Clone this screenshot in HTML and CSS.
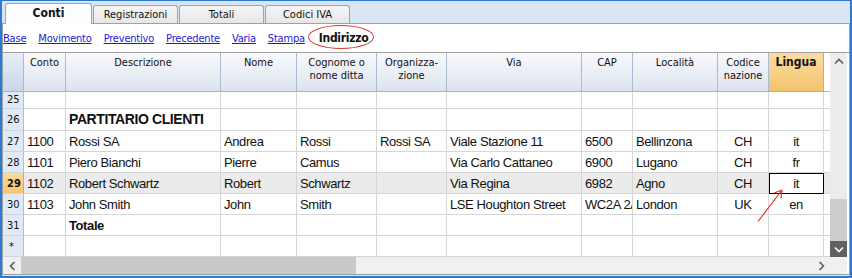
FILE: index.html
```html
<!DOCTYPE html>
<html lang="it">
<head>
    <meta charset="UTF-8">
    <title>Conti - Indirizzo</title>
    <link rel="stylesheet" href="styles.css">
</head>
<body>
    <div class="window">
        <div class="tabs">
            <div class="tab active">Conti</div>
            <div class="tab">Registrazioni</div>
            <div class="tab">Totali</div>
            <div class="tab">Codici IVA</div>
        </div>

        <div class="pane">
            <nav class="views">
                <a href="#">Base</a>
                <a href="#">Movimento</a>
                <a href="#">Preventivo</a>
                <a href="#">Precedente</a>
                <a href="#">Varia</a>
                <a href="#">Stampa</a>
                <span class="current">Indirizzo</span>
            </nav>

            <div class="sheet-area">
                <div class="sheet">
                    <div class="row head">
                        <div class="cell num"></div>
                        <div class="cell">Conto</div>
                        <div class="cell">Descrizione</div>
                        <div class="cell">Nome</div>
                        <div class="cell">Cognome o<br>nome ditta</div>
                        <div class="cell">Organizza-<br>zione</div>
                        <div class="cell">Via</div>
                        <div class="cell">CAP</div>
                        <div class="cell">Località</div>
                        <div class="cell">Codice<br>nazione</div>
                        <div class="cell sorted">Lingua</div>
                        <div class="cell fill"></div>
                    </div>
                    <div class="row first">
                        <div class="cell num">25</div>
                        <div class="cell"></div><div class="cell"></div><div class="cell"></div>
                        <div class="cell"></div><div class="cell"></div><div class="cell"></div>
                        <div class="cell"></div><div class="cell"></div><div class="cell"></div>
                        <div class="cell"></div><div class="cell fill"></div>
                    </div>
                    <div class="row title">
                        <div class="cell num">26</div>
                        <div class="cell"></div>
                        <div class="cell">PARTITARIO CLIENTI</div>
                        <div class="cell"></div><div class="cell"></div><div class="cell"></div>
                        <div class="cell"></div><div class="cell"></div><div class="cell"></div>
                        <div class="cell"></div><div class="cell"></div><div class="cell fill"></div>
                    </div>
                    <div class="row">
                        <div class="cell num">27</div>
                        <div class="cell">1100</div>
                        <div class="cell">Rossi SA</div>
                        <div class="cell">Andrea</div>
                        <div class="cell">Rossi</div>
                        <div class="cell">Rossi SA</div>
                        <div class="cell">Viale Stazione 11</div>
                        <div class="cell">6500</div>
                        <div class="cell">Bellinzona</div>
                        <div class="cell mid">CH</div>
                        <div class="cell mid">it</div>
                        <div class="cell fill"></div>
                    </div>
                    <div class="row">
                        <div class="cell num">28</div>
                        <div class="cell">1101</div>
                        <div class="cell">Piero Bianchi</div>
                        <div class="cell">Pierre</div>
                        <div class="cell">Camus</div>
                        <div class="cell"></div>
                        <div class="cell">Via Carlo Cattaneo</div>
                        <div class="cell">6900</div>
                        <div class="cell">Lugano</div>
                        <div class="cell mid">CH</div>
                        <div class="cell mid">fr</div>
                        <div class="cell fill"></div>
                    </div>
                    <div class="row sel">
                        <div class="cell num">29</div>
                        <div class="cell">1102</div>
                        <div class="cell">Robert Schwartz</div>
                        <div class="cell">Robert</div>
                        <div class="cell">Schwartz</div>
                        <div class="cell"></div>
                        <div class="cell">Via Regina</div>
                        <div class="cell">6982</div>
                        <div class="cell">Agno</div>
                        <div class="cell mid">CH</div>
                        <div class="cell mid cur">it</div>
                        <div class="cell fill"></div>
                    </div>
                    <div class="row">
                        <div class="cell num">30</div>
                        <div class="cell">1103</div>
                        <div class="cell">John Smith</div>
                        <div class="cell">John</div>
                        <div class="cell">Smith</div>
                        <div class="cell"></div>
                        <div class="cell">LSE Houghton Street</div>
                        <div class="cell">WC2A 2AE</div>
                        <div class="cell">London</div>
                        <div class="cell mid">UK</div>
                        <div class="cell mid">en</div>
                        <div class="cell fill"></div>
                    </div>
                    <div class="row">
                        <div class="cell num">31</div>
                        <div class="cell"></div>
                        <div class="cell bold">Totale</div>
                        <div class="cell"></div><div class="cell"></div><div class="cell"></div>
                        <div class="cell"></div><div class="cell"></div><div class="cell"></div>
                        <div class="cell"></div><div class="cell"></div><div class="cell fill"></div>
                    </div>
                    <div class="row">
                        <div class="cell num star">*</div>
                        <div class="cell"></div><div class="cell"></div><div class="cell"></div>
                        <div class="cell"></div><div class="cell"></div><div class="cell"></div>
                        <div class="cell"></div><div class="cell"></div><div class="cell"></div>
                        <div class="cell"></div><div class="cell fill"></div>
                    </div>
                </div>

                <div class="vscroll">
                    <div class="sbtn">
                        <svg width="10" height="7" viewBox="0 0 10 7"><polyline points="1,5.5 5,1.5 9,5.5" /></svg>
                    </div>
                    <div class="vtrack"><div class="vthumb"></div></div>
                    <div class="sbtn hot">
                        <svg width="10" height="7" viewBox="0 0 10 7"><polyline points="1,1.5 5,5.5 9,1.5" /></svg>
                    </div>
                </div>
            </div>

            <div class="hbar">
                <div class="hscroll">
                    <div class="sbtn wide">
                        <svg width="7" height="10" viewBox="0 0 7 10"><polyline points="5.5,1 1.5,5 5.5,9" /></svg>
                    </div>
                    <div class="hthumb"></div>
                    <div class="htrack"></div>
                    <div class="sbtn">
                        <svg width="7" height="10" viewBox="0 0 7 10"><polyline points="1.5,1 5.5,5 1.5,9" /></svg>
                    </div>
                </div>
                <div class="corner"></div>
            </div>
        </div>

        <!-- red annotation arrow -->
        <svg class="marks" width="852" height="278" viewBox="0 0 852 278">
            <path d="M758 221.5 L782 190 M782 190 L774 193 M782 190 L781 198" />
        </svg>
    </div>
</body>
</html>
```

FILE: styles.css
```css
body {
    margin: 0;
}
.window {
    position: relative;
    width: 852px;
    height: 278px;
    box-sizing: border-box;
    border: 2px solid #2b7ad3;
    border-top-width: 1px;
    background: #dae5f6;
    display: flex;
    flex-direction: column;
    font-family: "DejaVu Sans Condensed", "DejaVu Sans", sans-serif;
    font-size: 11px;
    color: #111;
}

/* tab strip */
.tabs {
    height: 22px;
    flex: none;
    display: flex;
    align-items: flex-end;
    padding-left: 3px;
}
.tab {
    box-sizing: border-box;
    width: 85px;
    height: 18px;
    margin-right: 1px;
    padding-top: 2px;
    border: 1px solid #a2a2a2;
    border-bottom: 0;
    border-radius: 3px 3px 0 0;
    background: linear-gradient(#f5f5f5, #e7e7e7);
    text-align: center;
    line-height: 13px;
}
.tab.active {
    position: relative;
    z-index: 1;
    width: 87px;
    height: 21px;
    margin-bottom: -1px;
    padding-top: 3px;
    background: linear-gradient(#f9fbfe, #ffffff);
    font-weight: bold;
    font-size: 12px;
}

.pane {
    flex: 1;
    margin-bottom: 1px;
    background: #fff;
    border: 1px solid #a0a0a0;
    display: flex;
    flex-direction: column;
}

/* view links */
.views {
    height: 28px;
    flex: none;
    display: flex;
    align-items: center;
    gap: 12px;
    letter-spacing: -0.2px;
}
.views a {
    color: #1a1ad8;
}
.views .current {
    position: relative;
    margin-left: 2px;
    font-weight: bold;
    font-size: 12px;
    letter-spacing: -0.3px;
}
.views .current::before {
    content: "";
    position: absolute;
    left: -11px;
    right: -6px;
    top: -6px;
    bottom: -4px;
    border: 1.5px solid #e0342d;
    border-radius: 50%;
}

/* spreadsheet */
.sheet-area {
    height: 205px;
    flex: none;
    box-sizing: border-box;
    border-top: 1px solid #a0a0a0;
    display: flex;
}
.sheet {
    width: 827px;
}
.row {
    display: grid;
    grid-template-columns: 21px 42px 155px 76px 80px 70px 135px 51px 85px 51px 55px 6px;
    height: 21px;
}
.cell {
    box-sizing: border-box;
    padding: 2px 3px 0;
    border-right: 1px solid #d6d6d6;
    border-bottom: 1px solid #d6d6d6;
    font-family: "Liberation Sans", Arial, sans-serif;
    font-size: 13px;
    letter-spacing: -0.4px;
    line-height: 18px;
    white-space: nowrap;
    overflow: hidden;
}
.cell.mid {
    text-align: center;
}
.cell.bold {
    font-weight: bold;
}
.cell.fill {
    border-right: 0;
}
.cell.num {
    padding-left: 4px;
    background: #e1e9f5;
    border-right-color: #a9bfdc;
    border-bottom-color: #cad6e7;
    font-family: "DejaVu Sans Condensed", "DejaVu Sans", sans-serif;
    font-size: 11px;
    letter-spacing: 0;
}
.cell.star {
    padding-left: 0;
    text-align: center;
}

.row.head {
    height: 39px;
}
.head .cell {
    padding: 3px 1px 0;
    background: linear-gradient(#f8f9fc, #dce4ef);
    border-right-color: #a9bbd2;
    border-bottom-color: #a4b5cb;
    font-family: "DejaVu Sans Condensed", "DejaVu Sans", sans-serif;
    font-size: 11px;
    letter-spacing: 0;
    line-height: 13px;
    text-align: center;
    white-space: normal;
}
.head .cell.num {
    background: linear-gradient(#e6edf7, #c9d6ea);
}
.head .cell.sorted {
    background: linear-gradient(#fbdca3, #f3c36c);
    border-right-color: #e9a548;
    border-bottom-color: #e9a548;
    font-weight: bold;
    font-size: 12px;
}
.head .cell.fill {
    background: #fff;
}

.row.first {
    height: 17px;
}
.first .cell {
    padding-top: 0;
    line-height: 16px;
}
.row.title {
    height: 22px;
}
.title .cell {
    padding-top: 0;
    line-height: 21px;
    font-size: 14px;
    font-weight: bold;
}
.title .cell.num {
    font-size: 11px;
    font-weight: normal;
}

.row.sel .cell {
    background: #ebebeb;
}
.row.sel .cell.num {
    background: linear-gradient(#fcd99c, #f6c56f);
    border-right-color: #e6a54c;
    font-weight: bold;
}
.row.sel .cell.cur {
    background: #fff;
    outline: 1px solid #000;
    outline-offset: -1px;
}

/* scrollbars */
.vscroll {
    width: 17px;
    background: #ececec;
    display: flex;
    flex-direction: column;
}
.vtrack {
    flex: 1;
    display: flex;
    flex-direction: column;
    justify-content: flex-end;
}
.vthumb {
    height: 42px;
    background: #cdcdcd;
}
.sbtn {
    width: 17px;
    height: 17px;
    flex: none;
    display: flex;
    align-items: center;
    justify-content: center;
}
.sbtn svg polyline {
    fill: none;
    stroke: #5a5a5a;
    stroke-width: 1.6;
}
.sbtn.hot {
    height: 16px;
    background: #606060;
}
.sbtn.hot svg polyline {
    stroke: #fff;
}
.sbtn.wide {
    width: 18px;
}

.hbar {
    height: 17px;
    flex: none;
    display: flex;
}
.hscroll {
    width: 827px;
    display: flex;
    background: #f0f0f0;
}
.hthumb {
    width: 335px;
    background: #c9c9c9;
}
.htrack {
    flex: 1;
}
.corner {
    width: 17px;
    background: #f0f0f0;
}

.marks {
    position: absolute;
    left: -2px;
    top: -1px;
    pointer-events: none;
}
.marks path {
    fill: none;
    stroke: #e8302a;
    stroke-width: 1.2;
}
```
